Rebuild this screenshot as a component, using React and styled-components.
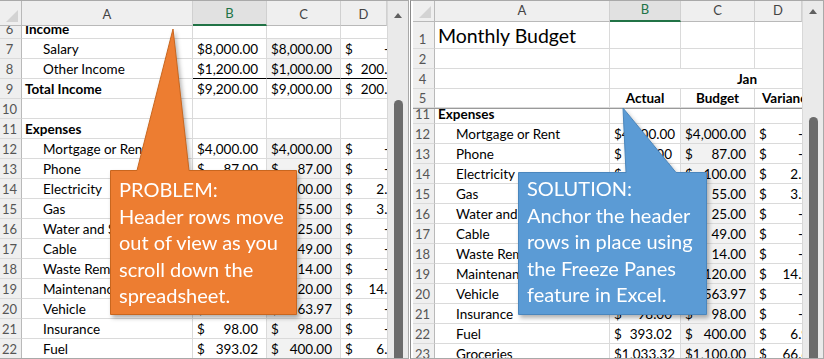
import styled, { createGlobalStyle } from "styled-components";

const GlobalStyle = createGlobalStyle`
  html, body {
    margin: 0;
    padding: 0;
    background: #ffffff;
  }
  body {
    font-family: Lato, "Liberation Sans", sans-serif;
    color: #000;
  }
`;

const GRID = "#dadada";

const Canvas = styled.div`
  position: relative;
  display: flex;
  gap: 1px;
  width: 824px;
  height: 359px;
  overflow: hidden;
  background: #fff;
`;

const Pane = styled.div`
  display: flex;
  box-sizing: border-box;
  width: ${(p) => p.$w}px;
  height: 359px;
  border: 1px solid #a9a9a9;
  border-left: ${(p) => (p.$left ? "1px solid #8a8a8a" : "none")};
  padding-left: ${(p) => (p.$left ? 2 : 0)}px;
  overflow: hidden;
`;

const Sheet = styled.div`
  display: flex;
  flex-direction: column;
  width: ${(p) => p.$w}px;
  overflow: hidden;
`;

const Row = styled.div`
  display: grid;
  grid-template-columns: ${(p) => p.$cols};
  flex: 0 0 ${(p) => p.$h}px;
  height: ${(p) => p.$h}px;
  border-bottom: ${(p) => (p.$freeze ? "1px solid #9a9a9a" : "none")};
  box-sizing: border-box;
`;

const Corner = styled.div`
  position: relative;
  background: #efefef;
  border-right: 1px solid #b9b9b9;
  border-bottom: 1px solid #b9b9b9;
  &::after {
    content: "";
    position: absolute;
    right: 3px;
    bottom: 3px;
    width: 12px;
    height: 12px;
    background: #d3d3d3;
    clip-path: polygon(100% 0, 100% 100%, 0 100%);
  }
`;

const ColHead = styled.div`
  display: flex;
  align-items: flex-end;
  justify-content: center;
  padding-bottom: 3px;
  box-sizing: border-box;
  background: ${(p) => (p.$sel ? "#e1e1e1" : "#efefef")};
  color: ${(p) => (p.$sel ? "#217346" : "#444")};
  font-size: 13px;
  line-height: 16px;
  border-right: 1px solid #d0d0d0;
  border-bottom: ${(p) => (p.$sel ? "2px solid #217346" : "1px solid #b9b9b9")};
  white-space: nowrap;
  overflow: hidden;
`;

const RowNum = styled.div`
  display: flex;
  align-items: flex-end;
  justify-content: center;
  padding: 0 2px 1px 0;
  box-sizing: border-box;
  background: #efefef;
  color: #555;
  font-size: 13px;
  line-height: 16px;
  border-right: 1px solid #b9b9b9;
  border-bottom: 1px solid ${GRID};
  overflow: hidden;
`;

const Cell = styled.div`
  display: flex;
  align-items: flex-end;
  justify-content: ${(p) => p.$align || "flex-start"};
  box-sizing: border-box;
  padding: 0 3px 1px ${(p) => (p.$indent ? 21 : 3)}px;
  font-size: ${(p) => p.$size || 13.5}px;
  line-height: ${(p) => (p.$size ? p.$size + 4 : 16)}px;
  font-weight: ${(p) => (p.$bold ? 700 : 400)};
  background: ${(p) => (p.$shade ? "#f2f2f2" : "#fff")};
  border-right: ${(p) => (p.$noRight ? "none" : `1px solid ${GRID}`)};
  border-bottom: 1px solid ${(p) => (p.$under ? "#000" : GRID)};
  white-space: nowrap;
  overflow: ${(p) => (p.$spill ? "visible" : "hidden")};
  position: relative;
  z-index: ${(p) => (p.$spill ? 1 : 0)};
`;

const JanCell = styled(Cell)`
  grid-column: span 3;
  padding-left: 127px;
`;

const VarianceCell = styled(Cell)`
  padding-left: 7px;
`;

const Money = styled.div`
  display: flex;
  justify-content: space-between;
  flex: 0 0 ${(p) => p.$w || "100%"};
  width: ${(p) => p.$w || "100%"};
  box-sizing: border-box;
  padding-left: 1px;
  padding-right: ${(p) => (p.$dash ? 19 : 5)}px;
`;

const ScrollTrack = styled.div`
  position: relative;
  flex: 1;
  background: #eaeaea;
  border-left: 1px solid #d8d8d8;
  display: flex;
  flex-direction: column;
  align-items: center;
`;

const Arrow = styled.div`
  margin-top: ${(p) => p.$top}px;
  width: 0;
  height: 0;
  border-left: 4px solid transparent;
  border-right: 4px solid transparent;
  border-bottom: 5px solid #606060;
`;

const Thumb = styled.div`
  margin-top: ${(p) => p.$gap}px;
  width: 9px;
  flex: 1;
  background: #6b6b6b;
  border-radius: 5px 5px 0 0;
`;

const Bubble = styled.div`
  position: absolute;
  left: ${(p) => p.$x}px;
  top: ${(p) => p.$y}px;
  width: ${(p) => p.$w}px;
  height: ${(p) => p.$h}px;
  filter: drop-shadow(2px 3px 2px rgba(0, 0, 0, 0.3));
  z-index: 5;
`;

const BubbleShape = styled.svg`
  position: absolute;
  left: 0;
  top: 0;
  overflow: visible;
`;

const BubbleText = styled.div`
  position: relative;
  padding: ${(p) => p.$pt}px 4px 0 9px;
  color: #fff;
  font-size: 20px;
  line-height: 26.5px;
  white-space: nowrap;
`;

const Callout = ({ x, y, w, h, tip, base, fill, stroke, pt, lines }) => (
  <Bubble $x={x} $y={y} $w={w} $h={h}>
    <BubbleShape width={w} height={h}>
      <path
        d={`M0.5 0.5 L${base[0]} 0.5 L${tip[0]} ${tip[1]} L${base[1]} 0.5 L${w - 0.5} 0.5 L${w - 0.5} ${h - 0.5} L0.5 ${h - 0.5} Z`}
        fill={fill}
        stroke={stroke}
        strokeWidth="1"
      />
    </BubbleShape>
    <BubbleText $pt={pt}>
      {lines.map((l) => (
        <div key={l}>{l}</div>
      ))}
    </BubbleText>
  </Bubble>
);

const expenses = [
  ["Mortgage or Rent", "4,000.00", "4,000.00", "-"],
  ["Phone", "87.00", "87.00", "-"],
  ["Electricity", "97.50", "100.00", "2.50"],
  ["Gas", "51.75", "55.00", "3.25"],
  ["Water and Sewer", "25.00", "25.00", "-"],
  ["Cable", "49.00", "49.00", "-"],
  ["Waste Removal", "14.00", "14.00", "-"],
  ["Maintenance", "105.80", "120.00", "14.20"],
  ["Vehicle", "563.97", "563.97", "-"],
  ["Insurance", "98.00", "98.00", "-"],
  ["Fuel", "393.02", "400.00", "6.98"],
  ["Groceries", "1,033.32", "1,100.00", "66.68"],
];

const leftRows = [
  { n: 6, h: 13, a: "Income", bold: true },
  { n: 7, a: "Salary", indent: true, v: ["8,000.00", "8,000.00", "-"] },
  { n: 8, a: "Other Income", indent: true, v: ["1,200.00", "1,000.00", "200.00"], under: true },
  { n: 9, a: "Total Income", bold: true, v: ["9,200.00", "9,000.00", "200.00"], total: true },
  { n: 10 },
  { n: 11, a: "Expenses", bold: true },
  ...expenses.slice(0, 11).map((e, i) => ({ n: 12 + i, a: e[0], indent: true, v: e.slice(1) })),
];

const rightRows = [
  { n: 11, h: 15, a: "Expenses", bold: true },
  ...expenses.map((e, i) => ({ n: 12 + i, a: e[0], indent: true, v: e.slice(1) })),
];

const Amount = ({ value, wide }) => (
  <Money $w={wide ? "64px" : undefined} $dash={value === "-"}>
    <span>$</span>
    <span>{value}</span>
  </Money>
);

const DataRow = ({ r, cols }) => (
  <Row $cols={cols} $h={r.h || 20}>
    <RowNum>{r.n}</RowNum>
    <Cell $bold={r.bold} $indent={r.indent}>{r.a}</Cell>
    <Cell $under={r.under}>{r.v && <Amount value={r.v[0]} />}</Cell>
    <Cell $under={r.under} $shade={r.v && !r.total}>
      {r.v && <Amount value={r.v[1]} />}
    </Cell>
    <Cell $under={r.under} $noRight>{r.v && <Amount value={r.v[2]} wide />}</Cell>
  </Row>
);

const ColumnHeads = ({ cols, h }) => (
  <Row $cols={cols} $h={h}>
    <Corner />
    <ColHead>A</ColHead>
    <ColHead $sel>B</ColHead>
    <ColHead>C</ColHead>
    <ColHead>D</ColHead>
  </Row>
);

const LEFT_COLS = "22px 171px 74px 74px 46px";
const RIGHT_COLS = "22px 175px 71px 74px 47px";

const App = () => (
  <>
    <GlobalStyle />
    <Canvas>
      <Pane $w={409}>
        <Sheet $w={387}>
          <ColumnHeads cols={LEFT_COLS} h={25} />
          {leftRows.map((r) => (
            <DataRow key={r.n} r={r} cols={LEFT_COLS} />
          ))}
        </Sheet>
        <ScrollTrack>
          <Arrow $top={12} />
          <Thumb $gap={82} />
        </ScrollTrack>
      </Pane>
      <Pane $w={414} $left>
        <Sheet $w={389}>
          <ColumnHeads cols={RIGHT_COLS} h={21} />
          <Row $cols={RIGHT_COLS} $h={27}>
            <RowNum>1</RowNum>
            <Cell $size={19.5} $spill>Monthly Budget</Cell>
            <Cell />
            <Cell />
            <Cell $noRight />
          </Row>
          <Row $cols={RIGHT_COLS} $h={20}>
            <RowNum>2</RowNum>
            <Cell />
            <Cell />
            <Cell />
            <Cell $noRight />
          </Row>
          <Row $cols={RIGHT_COLS} $h={20}>
            <RowNum>4</RowNum>
            <Cell />
            <JanCell $bold $noRight>Jan</JanCell>
          </Row>
          <Row $cols={RIGHT_COLS} $h={20} $freeze>
            <RowNum>5</RowNum>
            <Cell />
            <Cell $bold $align="center">Actual</Cell>
            <Cell $bold $align="center">Budget</Cell>
            <VarianceCell $bold $noRight>Variance</VarianceCell>
          </Row>
          {rightRows.map((r) => (
            <DataRow key={r.n} r={r} cols={RIGHT_COLS} />
          ))}
        </Sheet>
        <ScrollTrack>
          <Arrow $top={8} />
          <Thumb $gap={103} />
        </ScrollTrack>
      </Pane>

      <Callout
        x={110}
        y={170}
        w={187}
        h={145}
        tip={[63, -141]}
        base={[27, 79]}
        fill="#ed7d31"
        stroke="#c8661f"
        pt={6}
        lines={["PROBLEM:", "Header rows move", "out of view as you", "scroll down the", "spreadsheet."]}
      />
      <Callout
        x={518}
        y={172}
        w={189}
        h={143}
        tip={[105, -64]}
        base={[108, 158]}
        fill="#5b9bd5"
        stroke="#4a86bd"
        pt={3}
        lines={["SOLUTION:", "Anchor the header", "rows in place using", "the Freeze Panes", "feature in Excel."]}
      />
    </Canvas>
  </>
);

export default App;
